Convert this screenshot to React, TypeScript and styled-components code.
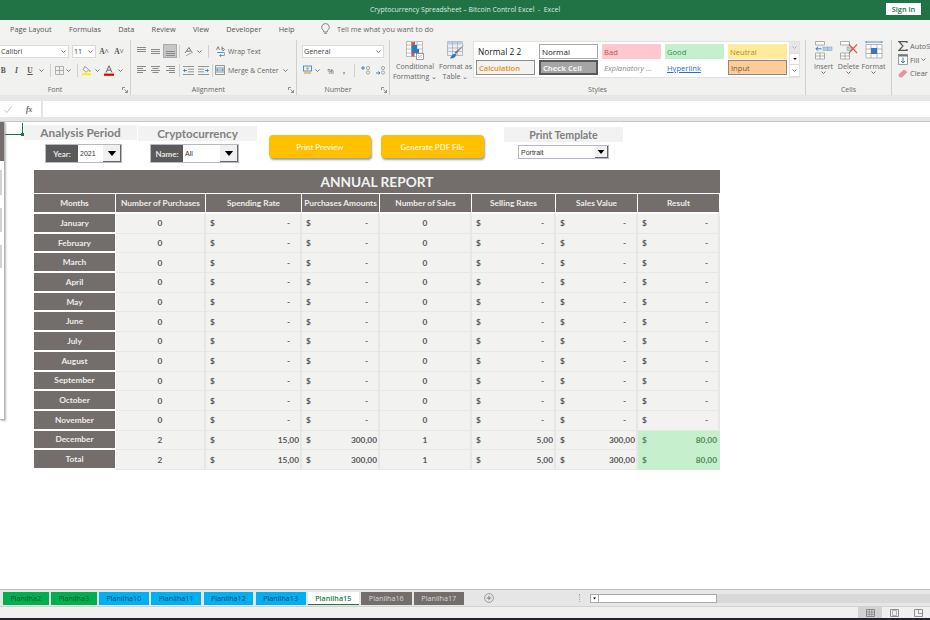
import React from "react";
import styled, { createGlobalStyle } from "styled-components";

const GlobalStyle = createGlobalStyle`
  html, body { margin: 0; padding: 0; background: #fff; }
  #root { width: 930px; height: 620px; overflow: hidden; }
`;

const UI = `"Open Sans", "Noto Sans", sans-serif`;
const CAL = `Lato, "Open Sans", sans-serif`;

const Window = styled.div`
  width: 930px;
  height: 620px;
  display: flex;
  flex-direction: column;
  overflow: hidden;
  font-family: ${UI};
  color: #444;
`;

const TitleBar = styled.div`
  height: 20px;
  flex: none;
  background: #217346;
  display: flex;
  align-items: center;
  justify-content: center;
  position: relative;
  color: #dcebe2;
  font-size: 6.9px;
  padding-bottom: 2px;
  box-sizing: border-box;
`;

const SignIn = styled.button`
  position: absolute;
  left: 886px;
  top: 3px;
  width: 35px;
  height: 12px;
  border: 0;
  padding: 0;
  background: #fff;
  color: #217346;
  font: 600 7.4px ${UI};
`;

const TabStrip = styled.div`
  height: 20px;
  flex: none;
  box-sizing: border-box;
  padding: 0 0 2px 10px;
  background: #f3f3f2;
  display: flex;
  align-items: center;
  gap: 17.3px;
  font-size: 7.35px;
  color: #555;
`;

const TellMe = styled.div`
  display: flex;
  align-items: center;
  gap: 7px;
  margin-left: 9px;
  color: #666;
`;

const Ribbon = styled.div`
  height: 55px;
  flex: none;
  background: #f1f1f0;
  display: flex;
  overflow: hidden;
`;

const Group = styled.div<{ $w: number }>`
  width: ${(p) => p.$w}px;
  flex: none;
  box-sizing: border-box;
  border-right: 1px solid #d0d0d0;
  position: relative;
  display: flex;
  flex-direction: column;
  height: 55px;
  padding-top: 4px;
`;

const GroupBody = styled.div`
  flex: 1;
  display: flex;
  flex-direction: column;
  gap: 5px;
  min-height: 0;
`;

const GroupLabel = styled.div<{ $pad?: number }>`
  height: 10px;
  line-height: 10px;
  margin-top: auto;
  padding-right: ${(p) => p.$pad ?? 0}px;
  text-align: center;
  font-size: 7px;
  color: #666;
`;

const Launcher = styled.svg`
  position: absolute;
  right: 2px;
  bottom: 2px;
`;

const Row = styled.div<{ $left?: number }>`
  display: flex;
  align-items: center;
  height: 14px;
  margin-left: ${(p) => p.$left ?? 0}px;
`;

const Slot = styled.div<{ $w: number; $on?: boolean }>`
  width: ${(p) => p.$w}px;
  height: 14px;
  flex: none;
  display: flex;
  align-items: center;
  justify-content: center;
  font-size: 8px;
  color: #555;
  box-sizing: border-box;
  ${(p) => p.$on && `background: #c6c6c6; border: 1px solid #ababab;`}
`;

const Glyph = styled.span<{ $italic?: boolean; $under?: boolean }>`
  font: ${(p) => (p.$italic ? "italic" : "normal")} 700 7.5px "Liberation Serif", serif;
  text-decoration: ${(p) => (p.$under ? "underline" : "none")};
  color: #555;
`;

const Divider = styled.div`
  width: 1px;
  height: 13px;
  margin: 0 auto;
  background: #d0d0d0;
`;

const ComboBox = styled.div<{ $w: number }>`
  width: ${(p) => p.$w}px;
  height: 13px;
  flex: none;
  background: #fff;
  border: 1px solid #dadada;
  box-sizing: border-box;
  display: flex;
  align-items: center;
  justify-content: space-between;
  padding: 0 2px 0 1px;
  font-size: 7.2px;
  color: #444;
`;

const TextAction = styled.span`
  font-size: 6.9px;
  color: #666;
  margin-left: 2px;
  white-space: nowrap;
`;

const StylesBody = styled.div`
  display: flex;
  margin-top: -3px;
`;

const LargeButton = styled.div<{ $w: number }>`
  width: ${(p) => p.$w}px;
  flex: none;
  display: flex;
  flex-direction: column;
  align-items: center;
  font-size: 7.1px;
  line-height: 10px;
  color: #666;
  text-align: center;
  white-space: nowrap;

  svg:first-child {
    margin-bottom: 1px;
  }
`;

const Gallery = styled.div`
  width: 327px;
  height: 37px;
  flex: none;
  margin-left: -1px;
  background: #fff;
  display: flex;
  box-sizing: border-box;
  border: 1px solid #e2e2e2;
`;

const GalleryGrid = styled.div`
  flex: 1;
  display: grid;
  grid-template-columns: repeat(5, 59px);
  column-gap: 4px;
  grid-template-rows: 15px 15px;
  row-gap: 1px;
  padding: 2px 0 0 2px;
`;

type StyleKind = "plain" | "normal" | "bad" | "good" | "neutral" | "calc" | "check" | "note" | "link" | "input";

const kindCss: Record<StyleKind, string> = {
  plain: "color:#222;font-size:8.4px;",
  normal: "color:#222;border:1px solid #a9a9a9;background:#fff;font-size:8px;",
  bad: "background:#ffc7ce;color:#c0504d;",
  good: "background:#c6efce;color:#3d8a4b;",
  neutral: "background:#ffeb9c;color:#b38a1d;",
  calc: "background:#f2f2f2;border:1px solid #8f8f8f;color:#f08a12;font-weight:600;",
  check: "background:#a5a5a5;border:2px solid #595959;color:#f2f2f2;font-weight:700;",
  note: "color:#8a8a8a;font-style:italic;",
  link: "color:#2a6fbd;text-decoration:underline;",
  input: "background:#ffcc99;border:1px solid #8a8a8a;color:#6b5a44;",
};

const StyleCell = styled.div<{ $kind: StyleKind }>`
  display: flex;
  align-items: center;
  padding-left: 2px;
  box-sizing: border-box;
  font-size: 7.6px;
  white-space: nowrap;
  overflow: hidden;
  ${(p) => kindCss[p.$kind]}
`;

const GalleryScroll = styled.div`
  width: 9px;
  flex: none;
  display: flex;
  flex-direction: column;
  border-left: 1px solid #e2e2e2;
`;

const ScrollStep = styled.div<{ $off?: boolean }>`
  flex: 1;
  display: flex;
  align-items: center;
  justify-content: center;
  background: ${(p) => (p.$off ? "#e6e6e6" : "#fff")};
  border-bottom: 1px solid #dcdcdc;
`;

const CellsBody = styled.div`
  display: flex;
  padding-left: 5px;
  margin-top: -3px;
`;

const EditingBody = styled.div`
  display: flex;
  flex-direction: column;
  gap: 0.5px;
  padding-left: 6px;
  margin-top: -4.5px;
`;

const EditRow = styled.div`
  display: flex;
  align-items: center;
  gap: 2px;
  height: 13px;
  font-size: 7.4px;
  color: #666;
  white-space: nowrap;
`;

const FormulaRow = styled.div`
  height: 27px;
  flex: none;
  box-sizing: border-box;
  background: #e6e6e6;
  padding-top: 6px;
  border-bottom: 1px solid #c8c8c8;
  display: flex;
`;

const FormulaButtons = styled.div`
  width: 41px;
  height: 16px;
  background: #fff;
  margin-right: 2px;
  display: flex;
  align-items: center;
  gap: 14px;
  padding-left: 4px;
  box-sizing: border-box;
`;

const FxLabel = styled.span`
  font: italic 700 7.5px "Liberation Serif", serif;
  color: #666;
`;

const FormulaInput = styled.div`
  flex: 1;
  height: 16px;
  background: #fff;
`;

const Sheet = styled.div`
  flex: 1;
  min-height: 0;
  background: #fff;
  position: relative;
  padding: 3px 0 0 24px;
`;

const SidePanel = styled.div`
  position: absolute;
  left: 0;
  top: 0;
  width: 5px;
  height: 298px;
  background: #fff;
  border-right: 1px solid #b5b5b5;
  border-bottom: 1px solid #b5b5b5;
  box-shadow: 1px 1px 2px #bbb;
  box-sizing: border-box;
`;

const SideHeader = styled.div`
  height: 39px;
  background: #736e6c;
`;

const SideNub = styled.div<{ $top: number; $h: number }>`
  position: absolute;
  left: 0;
  top: ${(p) => p.$top}px;
  width: 2px;
  height: ${(p) => p.$h}px;
  background: #d2d2d2;
`;

const SelectedCell = styled.div`
  position: absolute;
  left: 5px;
  top: 1px;
  width: 17px;
  height: 11px;
  border-right: 1px solid #217346;
  border-bottom: 1px solid #217346;

  &::after {
    content: "";
    position: absolute;
    right: -2px;
    bottom: -2px;
    width: 3px;
    height: 3px;
    background: #217346;
  }
`;

const Controls = styled.div`
  display: flex;
  height: 45px;
`;

const ControlGroup = styled.div<{ $w: number }>`
  width: ${(p) => p.$w}px;
  flex: none;
  display: flex;
  flex-direction: column;
  box-sizing: border-box;
`;

const ControlTitle = styled.div<{ $w: number; $top?: number; $size?: number }>`
  width: ${(p) => p.$w}px;
  height: 15px;
  margin-top: ${(p) => p.$top ?? 0}px;
  background: #f2f2f2;
  color: #808080;
  font: 700 ${(p) => p.$size ?? 11.8}px ${CAL};
  display: flex;
  align-items: center;
  justify-content: center;
`;

const Picker = styled.div<{ $w: number; $top: number; $left: number; $h?: number }>`
  width: ${(p) => p.$w}px;
  height: ${(p) => p.$h ?? 19}px;
  margin: ${(p) => p.$top}px 0 0 ${(p) => p.$left}px;
  display: flex;
  align-items: stretch;
  box-sizing: border-box;
  border: 1px solid #b9b9c4;
  background: #fff;
`;

const PickerLabel = styled.div`
  width: 32px;
  flex: none;
  background: #5a5a5a;
  color: #e6e6e6;
  font: 700 8px ${CAL};
  display: flex;
  align-items: center;
  justify-content: center;
`;

const PickerValue = styled.div`
  flex: 1;
  display: flex;
  align-items: center;
  padding-left: 2px;
  font: 400 7px "Liberation Sans", sans-serif;
  color: #333;
`;

const PickerButton = styled.div<{ $w?: number }>`
  width: ${(p) => p.$w ?? 18}px;
  flex: none;
  background: #f0f0f0;
  border-right: 1px solid #666;
  border-bottom: 1px solid #666;
  box-sizing: border-box;
  display: flex;
  align-items: center;
  justify-content: center;
`;

const ActionSlot = styled.div<{ $w: number }>`
  width: ${(p) => p.$w}px;
  flex: none;
  padding-top: 10px;
`;

const ActionButton = styled.button<{ $w: number }>`
  display: block;
  width: ${(p) => p.$w}px;
  height: 23px;
  border: 0;
  border-radius: 4px;
  padding: 0;
  background: #ffc000;
  color: #fff2cc;
  font: 700 7.9px ${CAL};
  box-shadow: 1px 2px 2px #a0a0a0;
`;

const Report = styled.div`
  width: 686px;
  margin: 0 0 0 10px;
  display: grid;
  grid-template-columns: 82px 90px 96px 78px 92px 84px 82px 82px;
  grid-template-rows: 24px 20px repeat(13, 19.7px);
`;

const ReportTitle = styled.div`
  grid-column: 1 / -1;
  background: #736e6c;
  color: #f2f2f2;
  border-bottom: 1px solid #fff;
  font: 700 13.7px ${CAL};
  display: flex;
  align-items: center;
  justify-content: center;
`;

const HeadCell = styled.div`
  background: #736e6c;
  color: #eeeceb;
  border-right: 1px solid #fff;
  border-bottom: 2px solid #fff;
  font: 700 8.3px ${CAL};
  display: flex;
  align-items: center;
  justify-content: center;
  white-space: nowrap;
`;

const CountCell = styled.div`
  background: #f2f2f1;
  border-right: 2px solid #e7e7e6;
  border-bottom: 1.5px solid #e7e7e6;
  color: #595959;
  font: 700 8.3px ${CAL};
  display: flex;
  align-items: center;
  justify-content: center;
`;

const MoneyCell = styled.div<{ $win?: boolean }>`
  background: ${(p) => (p.$win ? "#c6efce" : "#f2f2f1")};
  border-right: 2px solid ${(p) => (p.$win ? "#c6efce" : "#e7e7e6")};
  border-bottom: 1.5px solid ${(p) => (p.$win ? "#c6efce" : "#e7e7e6")};
  color: ${(p) => (p.$win ? "#4d8c58" : "#595959")};
  font: 700 8.3px ${CAL};
  display: flex;
  align-items: center;
  justify-content: space-between;
  padding: 0 1px 0 4px;
`;

const Dash = styled.span`
  margin-right: 9px;
`;

const SheetTabs = styled.div`
  height: 18px;
  flex: none;
  box-sizing: border-box;
  background: #e6e6e6;
  border-top: 1px solid #bdbdbd;
  border-bottom: 1px solid #d2d2d2;
  display: flex;
  align-items: center;
  padding-left: 3px;
`;

type TabKind = "green" | "blue" | "active" | "gray";

const tabCss: Record<TabKind, string> = {
  green: "background:#00b050;color:#075026;",
  blue: "background:#00b0f0;color:#0a4468;",
  active: "background:#fff;color:#2b7a4b;font-weight:600;border-bottom:1px solid #217346;",
  gray: "background:#736e6c;color:#d9d7d6;",
};

const SheetTab = styled.div<{ $kind: TabKind; $w: number }>`
  width: ${(p) => p.$w}px;
  height: 13px;
  flex: none;
  margin-right: 2.5px;
  box-sizing: border-box;
  display: flex;
  align-items: center;
  justify-content: center;
  font-size: 7.2px;
  ${(p) => tabCss[p.$kind]}
`;

const AddSheet = styled.div`
  margin-left: 18px;
  width: 10px;
  display: flex;
`;

const Grip = styled.div`
  margin-left: 85px;
  width: 2px;
  height: 8px;
  border-left: 1px dotted #aaa;
`;

const ScrollTrack = styled.div`
  margin-left: 8px;
  flex: 1;
  height: 9px;
  background: #d8d8d8;
  display: flex;
`;

const ScrollLeft = styled.div`
  width: 9px;
  box-sizing: border-box;
  background: #fff;
  border: 1px solid #aaa;
  display: flex;
  align-items: center;
  justify-content: center;
`;

const ScrollThumb = styled.div`
  width: 118px;
  box-sizing: border-box;
  background: #fff;
  border: 1px solid #aaa;
  border-left: 0;
`;

const StatusBar = styled.div`
  height: 11px;
  flex: none;
  background: #f0f0f0;
  display: flex;
  justify-content: flex-end;
`;

const ViewButton = styled.div<{ $on?: boolean }>`
  width: 24px;
  height: 11px;
  display: flex;
  align-items: center;
  justify-content: center;
  background: ${(p) => (p.$on ? "#d2d2d2" : "transparent")};
`;

const BottomEdge = styled.div`
  height: 2px;
  flex: none;
  background: #23232b;
`;

const Caret = ({ color = "#666" }: { color?: string }) => (
  <svg width="5" height="3" viewBox="0 0 5 3">
    <path d="M0.5 0.5 L2.5 2.5 L4.5 0.5" fill="none" stroke={color} strokeWidth="0.9" />
  </svg>
);

const Solid = ({ w, h }: { w: number; h: number }) => (
  <svg width={w} height={h} viewBox="0 0 10 6">
    <path d="M0 0 H10 L5 6 Z" fill="#000" />
  </svg>
);

const LaunchIcon = () => (
  <Launcher width="6" height="6" viewBox="0 0 6 6">
    <path d="M0.5 3 V0.5 H3 M2.5 2.5 L5.5 5.5 M5.5 3 V5.5 H3" fill="none" stroke="#777" strokeWidth="0.8" />
  </Launcher>
);

const Lines = ({ rows, color = "#8a8a8a" }: { rows: [number, number, number][]; color?: string }) => (
  <svg width="11" height="10" viewBox="0 0 11 10">
    {rows.map(([x, y, w], i) => (
      <rect key={i} x={x} y={y} width={w} height="1" fill={color} />
    ))}
  </svg>
);

const Bulb = () => (
  <svg width="9" height="12" viewBox="0 0 9 12">
    <path
      d="M4.5 0.6 A3.7 3.7 0 0 1 6.6 7.4 L6.2 9 H2.8 L2.4 7.4 A3.7 3.7 0 0 1 4.5 0.6 Z M3.2 10.4 H5.8"
      fill="none"
      stroke="#777"
      strokeWidth="0.9"
    />
  </svg>
);

const BordersIcon = () => (
  <svg width="9" height="9" viewBox="0 0 9 9">
    <path d="M0.5 0.5 H8.5 V8.5 H0.5 Z M4.5 0.5 V8.5 M0.5 4.5 H8.5" fill="none" stroke="#a0a0a0" strokeWidth="0.8" />
  </svg>
);

const FillIcon = () => (
  <svg width="10" height="11" viewBox="0 0 10 11">
    <path d="M3 1 L7.5 4.5 L4.5 7.5 L1.5 4.5 Z" fill="#f4f4f4" stroke="#777" strokeWidth="0.8" />
    <circle cx="8.5" cy="6" r="1" fill="#c9a227" />
    <rect x="0" y="8.6" width="10" height="2.2" fill="#ffee00" />
  </svg>
);

const FontColorIcon = () => (
  <svg width="10" height="11" viewBox="0 0 10 11">
    <path d="M2 7.5 L5 0.8 L8 7.5 M3.2 5.2 H6.8" fill="none" stroke="#666" strokeWidth="1" />
    <rect x="0" y="8.6" width="10" height="2.2" fill="#e50000" />
  </svg>
);

const OrientIcon = () => (
  <svg width="11" height="11" viewBox="0 0 11 11">
    <path d="M2 7 L6 1.5 L8.5 6 M3.6 5.2 H7.4" fill="none" stroke="#777" strokeWidth="1" />
    <path d="M3 9.8 L10 6" fill="none" stroke="#8aa" strokeWidth="0.9" />
  </svg>
);

const IndentIcon = ({ flip }: { flip?: boolean }) => (
  <svg width="11" height="9" viewBox="0 0 11 9" style={flip ? { transform: "scaleX(-1)" } : undefined}>
    <path d="M0 0.5 H11 M5 3.2 H11 M5 5.8 H11 M0 8.5 H11" stroke="#8a8a8a" strokeWidth="0.9" />
    <path d="M4 4.5 H0.8 M2.2 3 L0.6 4.5 L2.2 6" fill="none" stroke="#2d7cc1" strokeWidth="0.9" />
  </svg>
);

const WrapIcon = () => (
  <svg width="9" height="11" viewBox="0 0 9 11">
    <path d="M0.5 4 L2 0.7 L3.5 4 M6 0.5 V4 A1.2 1.2 0 1 0 6 3" fill="none" stroke="#666" strokeWidth="0.8" />
    <path d="M1 6.5 H7.5 A1.5 1.5 0 0 1 7.5 9.5 H4 M5 8.3 L3.6 9.5 L5 10.7" fill="none" stroke="#2d7cc1" strokeWidth="0.8" />
  </svg>
);

const MergeIcon = () => (
  <svg width="10" height="10" viewBox="0 0 10 10">
    <path d="M0.5 0.5 H9.5 V9.5 H0.5 Z M0.5 3 H9.5 M0.5 7 H9.5" fill="none" stroke="#808080" strokeWidth="0.8" />
    <path d="M1.5 5 H8.5 M3 4 L1.5 5 L3 6 M7 4 L8.5 5 L7 6" fill="none" stroke="#2d7cc1" strokeWidth="0.7" />
  </svg>
);

const AccountingIcon = () => (
  <svg width="9" height="10" viewBox="0 0 9 10">
    <rect x="0.5" y="1" width="8" height="5" fill="#e8f2fa" stroke="#2d7cc1" strokeWidth="0.8" />
    <circle cx="4.5" cy="3.5" r="1.2" fill="#e0a030" />
    <path d="M1 8 H8" stroke="#d8a040" strokeWidth="1.2" />
  </svg>
);

const DecimalIcon = ({ more }: { more?: boolean }) => (
  <svg width="11" height="10" viewBox="0 0 11 10">
    <path d={more ? "M0 3 H4 M2 1 V5" : "M0 8 H4 M2.4 6.5 L4 8 L2.4 9.5"} stroke="#2d7cc1" strokeWidth="0.9" fill="none" />
    <circle cx="7" cy="3" r="1.6" fill="none" stroke="#8a8a8a" strokeWidth="0.7" />
    <circle cx="7" cy="7.5" r="1.6" fill="none" stroke="#8a8a8a" strokeWidth="0.7" />
  </svg>
);

const CondFormatIcon = () => (
  <svg width="18" height="19" viewBox="0 0 18 19">
    <path d="M0.5 0.5 H16.5 V15.5 H0.5 Z M0.5 4 H16.5 M0.5 8 H16.5 M0.5 12 H16.5 M5.5 0.5 V15.5 M11 0.5 V15.5" fill="#fff" stroke="#a5a5a5" strokeWidth="0.7" />
    <rect x="5.5" y="1" width="3.5" height="3" fill="#e0573f" />
    <rect x="5.5" y="4" width="5.5" height="4" fill="#2d7cc1" />
    <rect x="5.5" y="8" width="7.5" height="4" fill="#2d7cc1" />
    <rect x="5.5" y="12" width="3" height="3.5" fill="#e0573f" />
    <rect x="10.5" y="12.5" width="7" height="6" fill="#fff" stroke="#777" strokeWidth="0.7" />
    <path d="M12.5 17 L15.5 14 M12.5 14.5 H13 M15 16.5 H15.5" stroke="#666" strokeWidth="0.6" />
  </svg>
);

const TableFormatIcon = () => (
  <svg width="18" height="19" viewBox="0 0 18 19">
    <path d="M0.5 0.5 H15.5 V14.5 H0.5 Z" fill="#e9f0f7" stroke="#a0a0a0" strokeWidth="0.7" />
    <rect x="0.5" y="0.5" width="15" height="3" fill="#b8cfe6" />
    <path d="M0.5 7 H15.5 M0.5 10.5 H15.5 M5.5 0.5 V14.5 M10.5 0.5 V14.5" stroke="#a0a0a0" strokeWidth="0.6" />
    <path d="M17 4 L9 13 L7.5 11.5 Z" fill="#777" />
    <path d="M3 17.5 C5 13 8 12 9.5 13.5 C9 16 6 18 3 17.5 Z" fill="#2d7cc1" />
  </svg>
);

const InsertIcon = () => (
  <svg width="18" height="19" viewBox="0 0 18 19">
    <path d="M0.5 0.5 H9.5 V4 H0.5 Z M0.5 12 H9.5 V18 H0.5 Z M0.5 15 H9.5 M5 12 V18" fill="#fff" stroke="#8e8e8e" strokeWidth="0.7" />
    <rect x="8" y="6" width="4.5" height="3.5" fill="#b9cfe3" stroke="#6f9ec6" strokeWidth="0.5" />
    <rect x="12.5" y="6" width="4.5" height="3.5" fill="#b9cfe3" stroke="#6f9ec6" strokeWidth="0.5" />
    <path d="M6.5 7.8 H1 M3 5.8 L1 7.8 L3 9.8" fill="none" stroke="#2d7cc1" strokeWidth="1" />
  </svg>
);

const DeleteIcon = () => (
  <svg width="18" height="19" viewBox="0 0 18 19">
    <path d="M0.5 0.5 H9.5 V4 H0.5 Z M0.5 12 H9.5 V18 H0.5 Z M0.5 15 H9.5 M5 12 V18" fill="#fff" stroke="#8e8e8e" strokeWidth="0.7" />
    <rect x="7" y="6" width="5" height="3.5" fill="#b9cfe3" stroke="#6f9ec6" strokeWidth="0.5" />
    <path d="M9 3.5 L17 12 M17 3.5 L9 12" stroke="#e0573f" strokeWidth="1.1" />
  </svg>
);

const FormatIcon = () => (
  <svg width="18" height="19" viewBox="0 0 18 19">
    <path d="M1 3.5 H17 V17 H1 Z M1 8 H17 M1 12.5 H17 M6 3.5 V17 M12 3.5 V17" fill="#fff" stroke="#9a9a9a" strokeWidth="0.7" />
    <rect x="6" y="7" width="6" height="6" fill="#2d7cc1" />
    <path d="M1 1 H17 M1 0 V2 M17 0 V2" stroke="#2d7cc1" strokeWidth="0.8" />
  </svg>
);

const SigmaIcon = () => (
  <svg width="10" height="10" viewBox="0 0 10 10">
    <path d="M9 2 V0.7 H1 L5 5 L1 9.3 H9 V8" fill="none" stroke="#555" strokeWidth="1.2" />
  </svg>
);

const FillDownIcon = () => (
  <svg width="10" height="11" viewBox="0 0 10 11">
    <rect x="0.5" y="0.5" width="9" height="10" fill="#fff" stroke="#8a8a8a" strokeWidth="0.8" />
    <rect x="0.5" y="0.5" width="9" height="2" fill="#777" />
    <path d="M5 3.5 V9 M3 7 L5 9 L7 7" fill="none" stroke="#2d7cc1" strokeWidth="1" />
  </svg>
);

const EraserIcon = () => (
  <svg width="10" height="9" viewBox="0 0 10 9">
    <path d="M6 0.5 L9.5 3 L4 8.5 L1 8 L0.5 5.5 Z" fill="#e8939c" />
  </svg>
);

const GridView = ({ kind }: { kind: "normal" | "layout" | "page" }) => (
  <svg width="9" height="8" viewBox="0 0 9 8">
    <path d="M0.5 0.5 H8.5 V7.5 H0.5 Z" fill="none" stroke="#777" strokeWidth="0.8" />
    {kind === "normal" && <path d="M0.5 3 H8.5 M0.5 5.2 H8.5 M3.2 0.5 V7.5 M5.8 0.5 V7.5" stroke="#777" strokeWidth="0.6" />}
    {kind === "layout" && <path d="M2.5 1.5 H6.5 V6.5 H2.5 Z" fill="none" stroke="#999" strokeWidth="0.7" />}
    {kind === "page" && <path d="M4.5 0.5 V4.5 H8.5" fill="none" stroke="#777" strokeWidth="0.7" />}
  </svg>
);

const PlusCircle = () => (
  <svg width="10" height="10" viewBox="0 0 10 10">
    <circle cx="5" cy="5" r="4.4" fill="none" stroke="#8a8a8a" strokeWidth="0.8" />
    <path d="M2.8 5 H7.2 M5 2.8 V7.2" stroke="#777" strokeWidth="0.9" />
  </svg>
);

const alignTop: [number, number, number][] = [[1, 1, 9], [1, 3, 9], [1, 5, 9]];
const alignMid: [number, number, number][] = [[1, 3, 9], [1, 5, 9], [1, 7, 9]];
const alignBot: [number, number, number][] = [[1, 5, 9], [1, 7, 9], [1, 9, 9]];
const alignL: [number, number, number][] = [[1, 1, 9], [1, 3, 6], [1, 5, 9], [1, 7, 6]];
const alignC: [number, number, number][] = [[1, 1, 9], [2.5, 3, 6], [1, 5, 9], [2.5, 7, 6]];
const alignR: [number, number, number][] = [[1, 1, 9], [4, 3, 6], [1, 5, 9], [4, 7, 6]];

const galleryCells: { kind: StyleKind; label: string }[] = [
  { kind: "plain", label: "Normal 2 2" },
  { kind: "normal", label: "Normal" },
  { kind: "bad", label: "Bad" },
  { kind: "good", label: "Good" },
  { kind: "neutral", label: "Neutral" },
  { kind: "calc", label: "Calculation" },
  { kind: "check", label: "Check Cell" },
  { kind: "note", label: "Explanatory ..." },
  { kind: "link", label: "Hyperlink" },
  { kind: "input", label: "Input" },
];

const headers = [
  "Months",
  "Number of Purchases",
  "Spending Rate",
  "Purchases Amounts",
  "Number of Sales",
  "Selling Rates",
  "Sales Value",
  "Result",
];

type ReportRow = {
  month: string;
  buys: number;
  rate?: string;
  amount?: string;
  sales: number;
  sellRate?: string;
  value?: string;
  result?: string;
};

const emptyMonths = [
  "January",
  "February",
  "March",
  "April",
  "May",
  "June",
  "July",
  "August",
  "September",
  "October",
  "November",
];

const rows: ReportRow[] = [
  ...emptyMonths.map((month) => ({ month, buys: 0, sales: 0 })),
  { month: "December", buys: 2, rate: "15,00", amount: "300,00", sales: 1, sellRate: "5,00", value: "300,00", result: "80,00" },
  { month: "Total", buys: 2, rate: "15,00", amount: "300,00", sales: 1, sellRate: "5,00", value: "300,00", result: "80,00" },
];

const Money = ({ value, win }: { value?: string; win?: boolean }) => (
  <MoneyCell $win={win}>
    <span>$</span>
    {value ? <span>{value}</span> : <Dash>-</Dash>}
  </MoneyCell>
);

const tabs: { label: string; kind: TabKind; w: number }[] = [
  { label: "Planilha2", kind: "green", w: 45.5 },
  { label: "Planilha3", kind: "green", w: 45.5 },
  { label: "Planilha10", kind: "blue", w: 49.75 },
  { label: "Planilha11", kind: "blue", w: 49.75 },
  { label: "Planilha12", kind: "blue", w: 49.75 },
  { label: "Planilha13", kind: "blue", w: 49.75 },
  { label: "Planilha15", kind: "active", w: 50.5 },
  { label: "Planilha16", kind: "gray", w: 50.5 },
  { label: "Planilha17", kind: "gray", w: 49.5 },
];

function App() {
  return (
    <Window>
      <GlobalStyle />
      <TitleBar>
        Cryptocurrency Spreadsheet – Bitcoin Control Excel&nbsp; -&nbsp; Excel
        <SignIn>Sign in</SignIn>
      </TitleBar>

      <TabStrip>
        <span>Page Layout</span>
        <span>Formulas</span>
        <span>Data</span>
        <span>Review</span>
        <span>View</span>
        <span>Developer</span>
        <span>Help</span>
        <TellMe>
          <Bulb />
          <span>Tell me what you want to do</span>
        </TellMe>
      </TabStrip>

      <Ribbon>
        <Group $w={131}>
          <GroupBody>
            <Row $left={-1}>
              <ComboBox $w={70}>
                Calibri <Caret />
              </ComboBox>
              <Slot $w={3} />
              <ComboBox $w={24}>
                11 <Caret />
              </ComboBox>
              <Slot $w={16}>
                <Glyph>A˄</Glyph>
              </Slot>
              <Slot $w={14}>
                <Glyph>A˅</Glyph>
              </Slot>
            </Row>
            <Row $left={-3}>
              <Slot $w={12.5}><Glyph>B</Glyph></Slot>
              <Slot $w={14}><Glyph $italic>I</Glyph></Slot>
              <Slot $w={13}><Glyph $under>U</Glyph></Slot>
              <Slot $w={9.5}><Caret /></Slot>
              <Slot $w={8.5}><Divider /></Slot>
              <Slot $w={9.5}><BordersIcon /></Slot>
              <Slot $w={9.5}><Caret /></Slot>
              <Slot $w={8.5}><Divider /></Slot>
              <Slot $w={9}><FillIcon /></Slot>
              <Slot $w={12}><Caret /></Slot>
              <Slot $w={12}><FontColorIcon /></Slot>
              <Slot $w={10}><Caret /></Slot>
            </Row>
          </GroupBody>
          <GroupLabel $pad={20}>Font</GroupLabel>
          <LaunchIcon />
        </Group>

        <Group $w={166}>
          <GroupBody>
            <Row $left={3}>
              <Slot $w={14}><Lines rows={alignTop} /></Slot>
              <Slot $w={15}><Lines rows={alignMid} /></Slot>
              <Slot $w={14} $on><Lines rows={alignBot} /></Slot>
              <Slot $w={4}><Divider /></Slot>
              <Slot $w={15}><OrientIcon /></Slot>
              <Slot $w={7}><Caret /></Slot>
              <Slot $w={11}><Divider /></Slot>
              <Slot $w={12}><WrapIcon /></Slot>
              <TextAction>Wrap Text</TextAction>
            </Row>
            <Row $left={3}>
              <Slot $w={14}><Lines rows={alignL} /></Slot>
              <Slot $w={15}><Lines rows={alignC} /></Slot>
              <Slot $w={14}><Lines rows={alignR} /></Slot>
              <Slot $w={4}><Divider /></Slot>
              <Slot $w={15}><IndentIcon /></Slot>
              <Slot $w={14}><IndentIcon flip /></Slot>
              <Slot $w={4}><Divider /></Slot>
              <Slot $w={12}><MergeIcon /></Slot>
              <TextAction>Merge &amp; Center</TextAction>
              <Slot $w={14}><Caret /></Slot>
            </Row>
          </GroupBody>
          <GroupLabel $pad={10}>Alignment</GroupLabel>
          <LaunchIcon />
        </Group>

        <Group $w={93}>
          <GroupBody>
            <Row $left={5}>
              <ComboBox $w={82}>
                General <Caret />
              </ComboBox>
            </Row>
            <Row $left={4}>
              <Slot $w={12}><AccountingIcon /></Slot>
              <Slot $w={9}><Caret /></Slot>
              <Slot $w={17}>%</Slot>
              <Slot $w={10}>
                <Glyph>,</Glyph>
              </Slot>
              <Slot $w={10}><Divider /></Slot>
              <Slot $w={15}><DecimalIcon more /></Slot>
              <Slot $w={15}><DecimalIcon /></Slot>
            </Row>
          </GroupBody>
          <GroupLabel $pad={10}>Number</GroupLabel>
          <LaunchIcon />
        </Group>

        <Group $w={416}>
          <StylesBody>
            <Slot $w={3} />
            <LargeButton $w={44}>
              <CondFormatIcon />
              <span>Conditional</span>
              <span>Formatting ⌄</span>
            </LargeButton>
            <LargeButton $w={37}>
              <TableFormatIcon />
              <span>Format as</span>
              <span>Table ⌄</span>
            </LargeButton>
            <Gallery>
              <GalleryGrid>
                {galleryCells.map((c) => (
                  <StyleCell key={c.label} $kind={c.kind}>
                    {c.label}
                  </StyleCell>
                ))}
              </GalleryGrid>
              <GalleryScroll>
                <ScrollStep $off><Caret color="#aaa" /></ScrollStep>
                <ScrollStep><Solid w={4} h={2} /></ScrollStep>
                <ScrollStep><Caret /></ScrollStep>
              </GalleryScroll>
            </Gallery>
          </StylesBody>
          <GroupLabel>Styles</GroupLabel>
        </Group>

        <Group $w={86}>
          <CellsBody>
            <LargeButton $w={25}>
              <InsertIcon />
              <span>Insert</span>
              <Caret />
            </LargeButton>
            <LargeButton $w={25}>
              <DeleteIcon />
              <span>Delete</span>
              <Caret />
            </LargeButton>
            <LargeButton $w={25}>
              <FormatIcon />
              <span>Format</span>
              <Caret />
            </LargeButton>
          </CellsBody>
          <GroupLabel>Cells</GroupLabel>
        </Group>

        <Group $w={60}>
          <EditingBody>
            <EditRow><SigmaIcon /> AutoSum</EditRow>
            <EditRow><FillDownIcon /> Fill <Caret /></EditRow>
            <EditRow><EraserIcon /> Clear <Caret /></EditRow>
          </EditingBody>
        </Group>
      </Ribbon>

      <FormulaRow>
        <FormulaButtons>
          <svg width="8" height="7" viewBox="0 0 8 7">
            <path d="M0.5 4 L3 6.5 L7.5 0.5" fill="none" stroke="#c4c4c4" strokeWidth="1" />
          </svg>
          <FxLabel>fx</FxLabel>
        </FormulaButtons>
        <FormulaInput />
      </FormulaRow>

      <Sheet>
        <SidePanel>
          <SideHeader />
          <SideNub $top={48} $h={25} />
          <SideNub $top={86} $h={24} />
          <SideNub $top={123} $h={23} />
        </SidePanel>
        <SelectedCell />

        <Controls>
          <ControlGroup $w={114}>
            <ControlTitle $w={113}>Analysis Period</ControlTitle>
            <Picker $w={77} $top={4} $left={21}>
              <PickerLabel>Year:</PickerLabel>
              <PickerValue>2021</PickerValue>
              <PickerButton><Solid w={10} h={5} /></PickerButton>
            </Picker>
          </ControlGroup>
          <ControlGroup $w={131}>
            <ControlTitle $w={119} $top={1} $size={11.6}>Cryptocurrency</ControlTitle>
            <Picker $w={89} $top={3} $left={12}>
              <PickerLabel>Name:</PickerLabel>
              <PickerValue>All</PickerValue>
              <PickerButton><Solid w={10} h={5} /></PickerButton>
            </Picker>
          </ControlGroup>
          <ActionSlot $w={112}>
            <ActionButton $w={102}>Print Preview</ActionButton>
          </ActionSlot>
          <ActionSlot $w={123}>
            <ActionButton $w={103}>Generate PDF File</ActionButton>
          </ActionSlot>
          <ControlGroup $w={120}>
            <ControlTitle $w={119} $top={2} $size={10.6}>Print Template</ControlTitle>
            <Picker $w={91} $top={3} $left={14} $h={14}>
              <PickerValue>Portrait</PickerValue>
              <PickerButton $w={13}><Solid w={8} h={4} /></PickerButton>
            </Picker>
          </ControlGroup>
        </Controls>

        <Report>
          <ReportTitle>ANNUAL REPORT</ReportTitle>
          {headers.map((h) => (
            <HeadCell key={h}>{h}</HeadCell>
          ))}
          {rows.map((r) => (
            <React.Fragment key={r.month}>
              <HeadCell>{r.month}</HeadCell>
              <CountCell>{r.buys}</CountCell>
              <Money value={r.rate} />
              <Money value={r.amount} />
              <CountCell>{r.sales}</CountCell>
              <Money value={r.sellRate} />
              <Money value={r.value} />
              <Money value={r.result} win={!!r.result} />
            </React.Fragment>
          ))}
        </Report>
      </Sheet>

      <SheetTabs>
        {tabs.map((t) => (
          <SheetTab key={t.label} $kind={t.kind} $w={t.w}>
            {t.label}
          </SheetTab>
        ))}
        <AddSheet><PlusCircle /></AddSheet>
        <Grip />
        <ScrollTrack>
          <ScrollLeft><Solid w={3} h={3} /></ScrollLeft>
          <ScrollThumb />
        </ScrollTrack>
      </SheetTabs>

      <StatusBar>
        <ViewButton $on><GridView kind="normal" /></ViewButton>
        <ViewButton><GridView kind="layout" /></ViewButton>
        <ViewButton><GridView kind="page" /></ViewButton>
      </StatusBar>
      <BottomEdge />
    </Window>
  );
}

export default App;
